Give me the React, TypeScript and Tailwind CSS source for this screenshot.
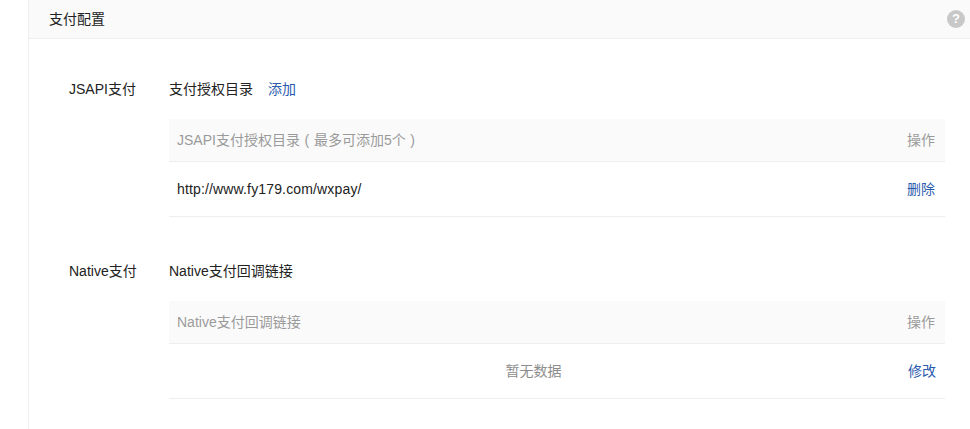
import React from "react";

const fontStack = "font-['Liberation_Sans','Noto_Sans_CJK_SC',sans-serif]";

const PaySection = ({
  label,
  title,
  action,
  head,
  children,
}: {
  label: string;
  title: string;
  action?: string;
  head: React.ReactNode;
  children: React.ReactNode;
}) => (
  <div className="flex">
    <div className="w-[140px] pl-10 h-5 leading-5 text-[#222]">{label}</div>
    <div className="w-[776px]">
      <div className="h-5 leading-5 text-[#222] flex">
        <span>{title}</span>
        {action && <a className="ml-[15px] text-[#2b5bad]">{action}</a>}
      </div>
      <div className="mt-5 flex items-center justify-between h-[43px] bg-[#fafafa] border-b border-[#eeeeee] pl-2 pr-[10px] text-[#9a9a9a]">
        <span>{head}</span>
        <span>操作</span>
      </div>
      {children}
    </div>
  </div>
);

export default function App() {
  return (
    <div className={`${fontStack} text-sm bg-white h-[429px] w-[970px] overflow-hidden pl-7`}>
      <div className="h-full border-l border-[#eeeeee]">
        <div className="h-[39px] bg-[#fafafa] border-b border-[#eeeeee] flex items-center justify-between pl-5 pr-[5px] text-[#222]">
          <span>支付配置</span>
          <span className="w-[18px] h-[18px] rounded-full bg-[#c8c8c8] text-white text-[13px] font-bold flex items-center justify-center">?</span>
        </div>
        <div className="pt-10">
          <PaySection
            label="JSAPI支付"
            title="支付授权目录"
            action="添加"
            head={
              <>
                JSAPI支付授权目录
                <span className="inline-block w-[14px] text-center">(</span>
                最多可添加5个
                <span className="inline-block w-[14px] text-center">)</span>
              </>
            }
          >
            <div className="h-[55px] flex items-center justify-between border-b border-[#eeeeee] pl-2 pr-[10px]">
              <span className="text-[#222] tracking-[0.15px]">http://www.fy179.com/wxpay/</span>
              <a className="text-[#2b5bad]">删除</a>
            </div>
          </PaySection>
          <div className="h-11" />
          <PaySection label="Native支付" title="Native支付回调链接" head="Native支付回调链接">
            <div className="h-[55px] flex items-center border-b border-[#eeeeee] pr-[9px]">
              <span className="flex-1 text-center text-[#8d8d8d] pr-[10px]">暂无数据</span>
              <a className="text-[#2b5bad]">修改</a>
            </div>
          </PaySection>
        </div>
      </div>
    </div>
  );
}
